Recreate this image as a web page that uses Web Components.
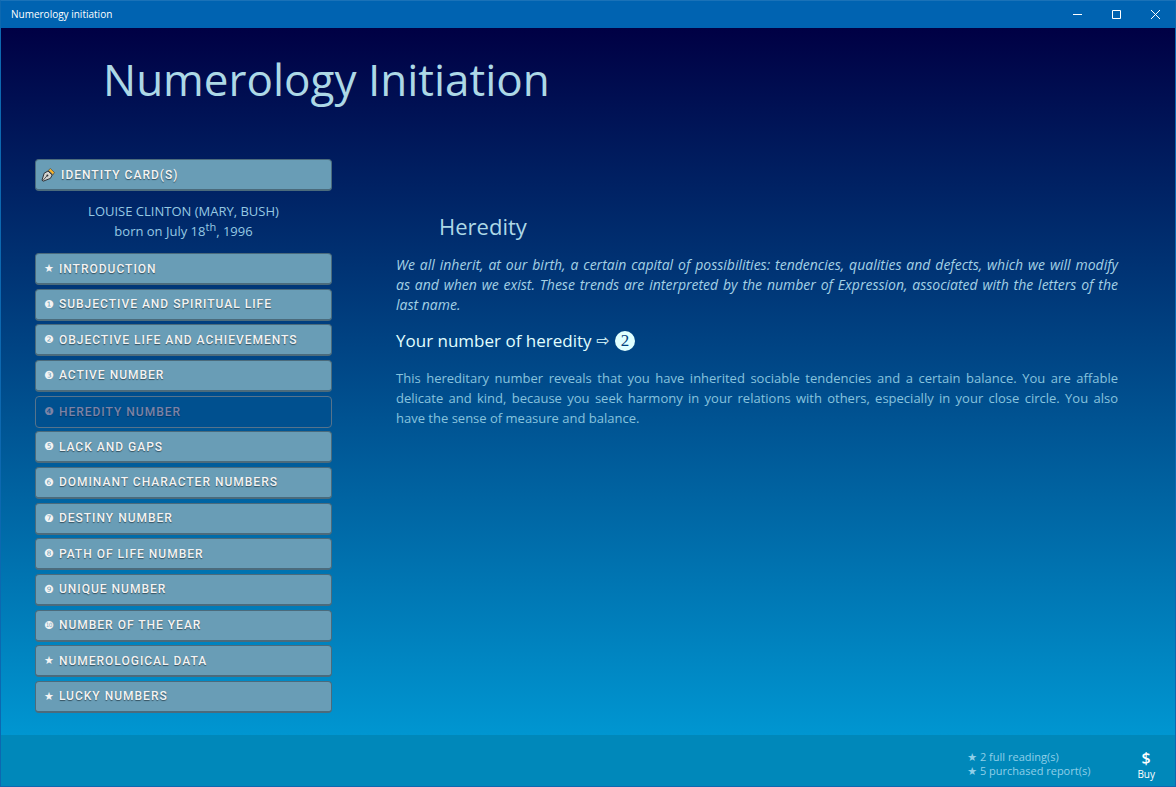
<!DOCTYPE html>
<html lang="en">
<head>
   <meta charset="UTF-8">
   <meta name="viewport" content="width=device-width, initial-scale=1">
   <title>Numerology initiation</title>
   <style>
      html, body {
         height: 100%;
         margin: 0;
      }

      body {
         font-family: 'Open Sans', 'Noto Sans', 'DejaVu Sans', sans-serif;
         font-size: 14px;
         line-height: 20px;
         --pale: #add8e6;
         --sky: #87c3de;
         --panel: #699db6;
         --edge: #4b6b7c;
      }
   </style>
</head>
<body>
   <app-window caption="Numerology initiation">
      <h1 slot="title">Numerology Initiation</h1>
      <side-menu slot="menu"></side-menu>
      <reading-page slot="page" heading="Heredity">
         <span slot="intro">We all inherit, at our birth, a certain capital of possibilities: tendencies, qualities and defects, which we will modify as&nbsp;and when we exist. These trends are interpreted by the number of Expression, associated with the letters of the last&nbsp;name.</span>
         <span slot="label">Your number of heredity</span>
         <span slot="number">2</span>
         <span slot="text">This hereditary number reveals that you have inherited sociable tendencies and a certain balance. You are affable delicate&nbsp;and kind, because you seek harmony in your relations with others, especially in your close circle. You also have&nbsp;the sense of measure and balance.</span>
      </reading-page>
      <status-bar slot="status">
         <li>★ 2 full reading(s)</li>
         <li>★ 5 purchased report(s)</li>
      </status-bar>
   </app-window>

   <script>
      // Window frame: caption bar, title, two columns and the status bar
      class AppWindow extends HTMLElement {
         constructor() {
            super();

            this.attachShadow({mode: 'open'});
            this.shadowRoot.innerHTML = `
               <style>
               :host {
                  display: flex;
                  flex-direction: column;
                  box-sizing: border-box;
                  min-height: 100%;
                  border: 1px solid #0d68b0;
                  border-top-color: #1a72b8;
                  background: #0088ba;
               }

               .caption {
                  display: flex;
                  align-items: center;
                  justify-content: space-between;
                  height: 27px;
                  padding-left: 10px;
                  background: #0063b1;
                  color: white;
                  font-size: 10px;
               }

               .caption span {
                  padding-bottom: 2px;
               }

               .buttons {
                  display: flex;
               }

               .buttons button {
                  display: grid;
                  place-items: center;
                  width: 39px;
                  height: 27px;
                  padding: 0;
                  border: 0;
                  background: none;
                  color: white;
               }

               svg {
                  width: 11px;
                  height: 11px;
                  fill: none;
                  stroke: currentColor;
               }

               main {
                  flex: 1;
                  display: grid;
                  grid-template-columns: 297px 1fr;
                  grid-template-rows: 131px 1fr;
                  column-gap: 64px;
                  padding: 0 57px 22px 34px;
                  background: linear-gradient(#000044, #0096d1);
               }

               ::slotted(h1) {
                  grid-column: 1 / -1;
                  margin: 19px 0 0 68px;
                  color: var(--pale);
                  font-size: 44px;
                  font-weight: 400;
                  line-height: 64px;
               }
               </style>

               <header class="caption">
                  <span></span>
                  <div class="buttons">
                     <button aria-label="Minimize"><svg viewBox="0 0 11 11"><path d="M1 5.5h9"/></svg></button>
                     <button aria-label="Maximize"><svg viewBox="0 0 11 11"><path d="M1.5 1.5h8v8h-8z"/></svg></button>
                     <button aria-label="Close"><svg viewBox="0 0 11 11"><path d="M1 1l9 9M10 1l-9 9"/></svg></button>
                  </div>
               </header>
               <main>
                  <slot name="title"></slot>
                  <slot name="menu"></slot>
                  <slot name="page"></slot>
               </main>
               <slot name="status"></slot>
            `;
            this.shadowRoot.querySelector('.caption span').textContent = this.getAttribute('caption');
         }
      }

      // One entry of the menu; the current chapter is the disabled one
      class MenuButton extends HTMLElement {
         constructor() {
            super();

            this.attachShadow({mode: 'open'});
            this.shadowRoot.innerHTML = `
               <style>
               :host {
                  display: block;
               }

               button {
                  display: flex;
                  align-items: center;
                  gap: 5px;
                  box-sizing: border-box;
                  width: 100%;
                  height: 32px;
                  padding: 0 8px;
                  border: 1px solid var(--edge);
                  border-bottom-width: 2px;
                  border-radius: 4px;
                  background: var(--panel);
                  color: #f4f4f4;
                  font: 500 12px Roboto, 'Liberation Sans', sans-serif;
                  letter-spacing: 1px;
                  text-align: left;
                  text-transform: uppercase;
                  text-shadow: 0 1px 1px #33505f;
               }

               button:disabled {
                  border: 1px solid #56738c;
                  background: #00508f;
                  color: #7d83a6;
                  text-shadow: 0 1px 1px #003566;
               }

               .mark {
                  font-family: 'DejaVu Sans', sans-serif;
                  font-size: 11px;
                  letter-spacing: 0;
                  text-shadow: none;
               }

               :host([icon]) button {
                  gap: 6px;
                  padding: 0 5px;
               }

               :host([icon]) .mark {
                  display: flex;
               }

               svg {
                  width: 14px;
                  height: 14px;
               }
               </style>

               <button><span class="mark"><slot name="mark"></slot></span><slot></slot></button>
            `;
            this.button = this.shadowRoot.querySelector('button');
            this.button.disabled = this.hasAttribute('current');
            if (this.hasAttribute('icon')) {
               this.shadowRoot.querySelector('.mark').innerHTML = `
                  <svg viewBox="0 0 14 14" aria-hidden="true">
                     <path d="M7.4 2.2l2-1.6 4 3.8-1.4 2.4z" fill="#fbb52c" stroke="#3b3a36" stroke-width=".6"/>
                     <path d="M7 3l4.2 4-1.8 3.4-7.2 2.8-1.2-1 2.2-7z" fill="#d3d3cf" stroke="#2e3338"/>
                     <path d="M1.6 12.8l4.4-5" fill="none" stroke="#2e3338" stroke-width=".8"/>
                     <circle cx="6.4" cy="7.4" r="1" fill="#2e3338"/>
                  </svg>`;
            }
         }
      }

      class SideMenu extends HTMLElement {
         constructor() {
            super();

            this.attachShadow({mode: 'open'});
            this.shadowRoot.innerHTML = `
               <style>
               :host {
                  display: flex;
                  flex-direction: column;
               }

               p {
                  margin: 10px 0 12px;
                  color: #96c9e3;
                  font-size: 13px;
                  line-height: 20px;
                  text-align: center;
               }

               sup {
                  font-size: 11px;
                  line-height: 0;
               }

               nav {
                  flex: 1;
                  display: flex;
                  flex-direction: column;
                  justify-content: space-between;
               }
               </style>

               <menu-button icon>Identity card(s)</menu-button>
               <p>LOUISE CLINTON (MARY, BUSH)<br>born on July 18<sup>th</sup>, 1996</p>
               <nav></nav>
            `;
            const nav = this.shadowRoot.querySelector('nav');
            nav.innerHTML = chapters.map(chapter => `
               <menu-button ${chapter.current ? 'current' : ''}><span slot="mark">${chapter.mark}</span>${chapter.name}</menu-button>
            `).join('');
         }
      }

      class ReadingPage extends HTMLElement {
         constructor() {
            super();

            this.attachShadow({mode: 'open'});
            this.shadowRoot.innerHTML = `
               <style>
               :host {
                  display: block;
                  padding-top: 51px;
                  color: var(--sky);
               }

               h2 {
                  margin: 0 0 13px 43px;
                  color: var(--pale);
                  font-size: 22px;
                  font-weight: 400;
                  line-height: 32px;
               }

               p {
                  margin: 0;
                  font-size: 13px;
                  text-align: justify;
               }

               .intro {
                  color: #a4d1e5;
                  font-size: 14px;
                  font-style: italic;
               }

               h3 {
                  display: flex;
                  align-items: center;
                  gap: 5px;
                  margin: 10px 0 11px;
                  color: #e0ffff;
                  font-size: 17px;
                  font-weight: 400;
                  line-height: 32px;
               }

               .arrow {
                  font-family: 'DejaVu Sans', sans-serif;
                  font-size: 16px;
               }

               .number {
                  width: 20px;
                  border-radius: 50%;
                  background: #e0ffff;
                  color: #00407d;
                  font-family: 'Liberation Serif', serif;
                  font-size: 17px;
                  line-height: 20px;
                  text-align: center;
               }
               </style>

               <h2></h2>
               <p class="intro"><slot name="intro"></slot></p>
               <h3><slot name="label"></slot><span class="arrow">⇨</span><span class="number"><slot name="number"></slot></span></h3>
               <p><slot name="text"></slot></p>
            `;
            this.shadowRoot.querySelector('h2').textContent = this.getAttribute('heading');
         }
      }

      class StatusBar extends HTMLElement {
         constructor() {
            super();

            this.attachShadow({mode: 'open'});
            this.shadowRoot.innerHTML = `
               <style>
               :host {
                  display: flex;
                  align-items: center;
                  justify-content: flex-end;
                  gap: 41px;
                  height: 51px;
                  padding-right: 14px;
                  color: #8fcfe8;
                  font-size: 11px;
                  line-height: 14px;
               }

               ul {
                  margin: 7px 0 0;
                  padding: 0;
                  list-style: none;
               }

               button {
                  display: flex;
                  flex-direction: column;
                  align-items: center;
                  margin: 8px 0 0;
                  padding: 0 6px;
                  border: 0;
                  background: none;
                  color: white;
                  font: inherit;
                  font-size: 10px;
               }

               .sign {
                  font-size: 16px;
                  font-weight: 600;
                  line-height: 18px;
               }
               </style>

               <ul><slot></slot></ul>
               <button><span class="sign">$</span>Buy</button>
            `;
         }
      }

      const chapters = [
         { mark: '★', name: 'Introduction' },
         { mark: '❶', name: 'Subjective and spiritual life' },
         { mark: '❷', name: 'Objective life and achievements' },
         { mark: '❸', name: 'Active number' },
         { mark: '❹', name: 'Heredity number', current: true },
         { mark: '❺', name: 'Lack and gaps' },
         { mark: '❻', name: 'Dominant character numbers' },
         { mark: '❼', name: 'Destiny number' },
         { mark: '❽', name: 'Path of life number' },
         { mark: '❾', name: 'Unique number' },
         { mark: '❿', name: 'Number of the year' },
         { mark: '★', name: 'Numerological data' },
         { mark: '★', name: 'Lucky numbers' }
      ];

      customElements.define('menu-button', MenuButton);
      customElements.define('side-menu', SideMenu);
      customElements.define('reading-page', ReadingPage);
      customElements.define('status-bar', StatusBar);
      customElements.define('app-window', AppWindow);
   </script>
</body>
</html>
